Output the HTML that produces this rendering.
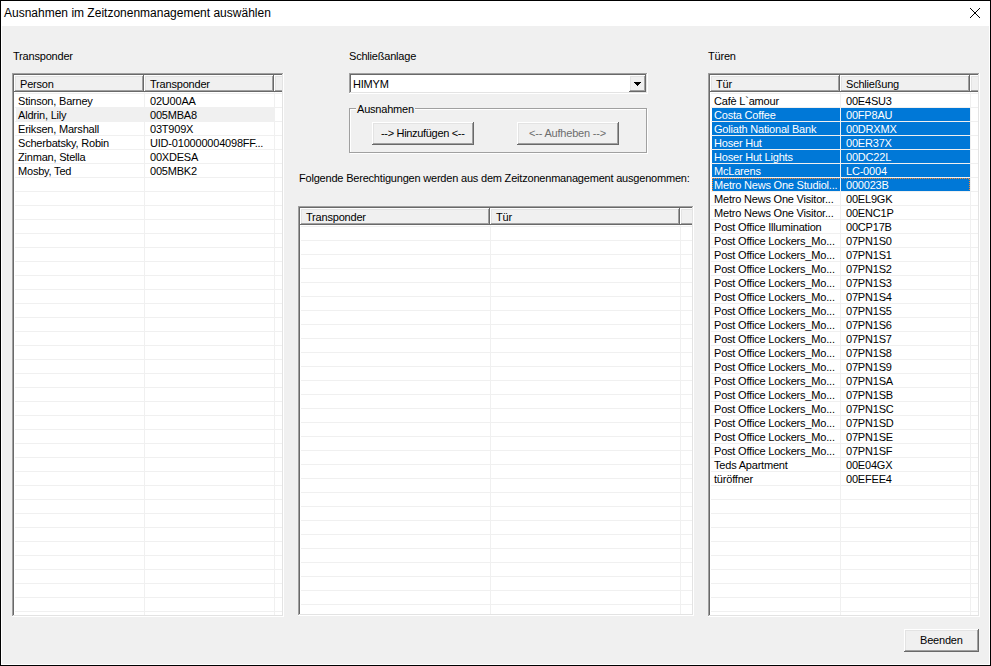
<!DOCTYPE html>
<html><head><meta charset="utf-8"><title>Ausnahmen</title><style>
html,body{margin:0;padding:0;}
body{width:991px;height:666px;overflow:hidden;position:relative;background:#f0f0f0;font-family:"Liberation Sans",sans-serif;font-size:11px;color:#000;}
.r{position:absolute;}
.t{position:absolute;white-space:nowrap;line-height:13px;letter-spacing:-0.2px;}
.tt{position:absolute;white-space:nowrap;line-height:15px;font-size:12px;}
.fh{background:repeating-linear-gradient(90deg,#ff8728 0 1px,transparent 1px 2px);}
.fv{background:repeating-linear-gradient(180deg,#ff8728 0 1px,transparent 1px 2px);}
</style></head><body>

<div class="r" style="left:0px;top:0px;width:991px;height:666px;background:#000;"></div>
<div class="r" style="left:1px;top:1px;width:989px;height:664px;background:#fff;"></div>
<div class="r" style="left:2px;top:26px;width:987px;height:638px;background:#f0f0f0;"></div>
<div class="tt" style="left:4px;top:6px;">Ausnahmen im Zeitzonenmanagement auswählen</div>
<svg class="r" style="left:970px;top:8px" width="10" height="10" shape-rendering="crispEdges" fill="#000"><rect x="0" y="0" width="1" height="1"/><rect x="9" y="0" width="1" height="1"/><rect x="1" y="1" width="1" height="1"/><rect x="8" y="1" width="1" height="1"/><rect x="2" y="2" width="1" height="1"/><rect x="7" y="2" width="1" height="1"/><rect x="3" y="3" width="1" height="1"/><rect x="6" y="3" width="1" height="1"/><rect x="4" y="4" width="1" height="1"/><rect x="5" y="4" width="1" height="1"/><rect x="5" y="5" width="1" height="1"/><rect x="4" y="5" width="1" height="1"/><rect x="6" y="6" width="1" height="1"/><rect x="3" y="6" width="1" height="1"/><rect x="7" y="7" width="1" height="1"/><rect x="2" y="7" width="1" height="1"/><rect x="8" y="8" width="1" height="1"/><rect x="1" y="8" width="1" height="1"/><rect x="9" y="9" width="1" height="1"/><rect x="0" y="9" width="1" height="1"/></svg>
<div class="t" style="left:13px;top:50px;">Transponder</div>
<div class="t" style="left:349px;top:50px;">Schließanlage</div>
<div class="t" style="left:708px;top:50px;">Türen</div>
<div class="t" style="left:299px;top:172px;">Folgende Berechtigungen werden aus dem Zeitzonenmanagement ausgenommen:</div>
<div class="r" style="left:12px;top:73px;width:271px;height:1px;background:#a0a0a0;"></div>
<div class="r" style="left:12px;top:73px;width:1px;height:543px;background:#a0a0a0;"></div>
<div class="r" style="left:12px;top:616px;width:272px;height:1px;background:#ffffff;"></div>
<div class="r" style="left:283px;top:73px;width:1px;height:544px;background:#ffffff;"></div>
<div class="r" style="left:13px;top:74px;width:269px;height:1px;background:#696969;"></div>
<div class="r" style="left:13px;top:74px;width:1px;height:541px;background:#696969;"></div>
<div class="r" style="left:13px;top:615px;width:270px;height:1px;background:#e3e3e3;"></div>
<div class="r" style="left:282px;top:74px;width:1px;height:542px;background:#e3e3e3;"></div>
<div class="r" style="left:14px;top:75px;width:268px;height:540px;background:#ffffff;"></div>
<div class="r" style="left:14px;top:75px;width:130px;height:17px;background:#f0f0f0;"></div>
<div class="r" style="left:14px;top:75px;width:129px;height:1px;background:#ffffff;"></div>
<div class="r" style="left:14px;top:75px;width:1px;height:16px;background:#ffffff;"></div>
<div class="r" style="left:14px;top:91px;width:130px;height:1px;background:#696969;"></div>
<div class="r" style="left:143px;top:75px;width:1px;height:17px;background:#696969;"></div>
<div class="r" style="left:15px;top:76px;width:127px;height:1px;background:#e3e3e3;"></div>
<div class="r" style="left:15px;top:76px;width:1px;height:14px;background:#e3e3e3;"></div>
<div class="r" style="left:15px;top:90px;width:128px;height:1px;background:#a0a0a0;"></div>
<div class="r" style="left:142px;top:76px;width:1px;height:15px;background:#a0a0a0;"></div>
<div class="t" style="left:20px;top:78px;">Person</div>
<div class="r" style="left:144px;top:75px;width:130px;height:17px;background:#f0f0f0;"></div>
<div class="r" style="left:144px;top:75px;width:129px;height:1px;background:#ffffff;"></div>
<div class="r" style="left:144px;top:75px;width:1px;height:16px;background:#ffffff;"></div>
<div class="r" style="left:144px;top:91px;width:130px;height:1px;background:#696969;"></div>
<div class="r" style="left:273px;top:75px;width:1px;height:17px;background:#696969;"></div>
<div class="r" style="left:145px;top:76px;width:127px;height:1px;background:#e3e3e3;"></div>
<div class="r" style="left:145px;top:76px;width:1px;height:14px;background:#e3e3e3;"></div>
<div class="r" style="left:145px;top:90px;width:128px;height:1px;background:#a0a0a0;"></div>
<div class="r" style="left:272px;top:76px;width:1px;height:15px;background:#a0a0a0;"></div>
<div class="t" style="left:150px;top:78px;">Transponder</div>
<div class="r" style="left:274px;top:75px;width:8px;height:17px;background:#f0f0f0;"></div>
<div class="r" style="left:274px;top:75px;width:8px;height:1px;background:#ffffff;"></div>
<div class="r" style="left:274px;top:75px;width:1px;height:16px;background:#ffffff;"></div>
<div class="r" style="left:274px;top:91px;width:8px;height:1px;background:#696969;"></div>
<div class="r" style="left:275px;top:76px;width:7px;height:1px;background:#e3e3e3;"></div>
<div class="r" style="left:275px;top:76px;width:1px;height:14px;background:#e3e3e3;"></div>
<div class="r" style="left:275px;top:90px;width:7px;height:1px;background:#a0a0a0;"></div>
<div class="r" style="left:16px;top:107px;width:258px;height:14px;background:#f0f0f0;"></div>
<div class="r" style="left:15px;top:93px;width:267px;height:1px;background:#f0f0f0;"></div>
<div class="r" style="left:15px;top:107px;width:267px;height:1px;background:#f0f0f0;"></div>
<div class="r" style="left:15px;top:121px;width:267px;height:1px;background:#f0f0f0;"></div>
<div class="r" style="left:15px;top:135px;width:267px;height:1px;background:#f0f0f0;"></div>
<div class="r" style="left:15px;top:149px;width:267px;height:1px;background:#f0f0f0;"></div>
<div class="r" style="left:15px;top:163px;width:267px;height:1px;background:#f0f0f0;"></div>
<div class="r" style="left:15px;top:177px;width:267px;height:1px;background:#f0f0f0;"></div>
<div class="r" style="left:15px;top:191px;width:267px;height:1px;background:#f0f0f0;"></div>
<div class="r" style="left:15px;top:205px;width:267px;height:1px;background:#f0f0f0;"></div>
<div class="r" style="left:15px;top:219px;width:267px;height:1px;background:#f0f0f0;"></div>
<div class="r" style="left:15px;top:233px;width:267px;height:1px;background:#f0f0f0;"></div>
<div class="r" style="left:15px;top:247px;width:267px;height:1px;background:#f0f0f0;"></div>
<div class="r" style="left:15px;top:261px;width:267px;height:1px;background:#f0f0f0;"></div>
<div class="r" style="left:15px;top:275px;width:267px;height:1px;background:#f0f0f0;"></div>
<div class="r" style="left:15px;top:289px;width:267px;height:1px;background:#f0f0f0;"></div>
<div class="r" style="left:15px;top:303px;width:267px;height:1px;background:#f0f0f0;"></div>
<div class="r" style="left:15px;top:317px;width:267px;height:1px;background:#f0f0f0;"></div>
<div class="r" style="left:15px;top:331px;width:267px;height:1px;background:#f0f0f0;"></div>
<div class="r" style="left:15px;top:345px;width:267px;height:1px;background:#f0f0f0;"></div>
<div class="r" style="left:15px;top:359px;width:267px;height:1px;background:#f0f0f0;"></div>
<div class="r" style="left:15px;top:373px;width:267px;height:1px;background:#f0f0f0;"></div>
<div class="r" style="left:15px;top:387px;width:267px;height:1px;background:#f0f0f0;"></div>
<div class="r" style="left:15px;top:401px;width:267px;height:1px;background:#f0f0f0;"></div>
<div class="r" style="left:15px;top:415px;width:267px;height:1px;background:#f0f0f0;"></div>
<div class="r" style="left:15px;top:429px;width:267px;height:1px;background:#f0f0f0;"></div>
<div class="r" style="left:15px;top:443px;width:267px;height:1px;background:#f0f0f0;"></div>
<div class="r" style="left:15px;top:457px;width:267px;height:1px;background:#f0f0f0;"></div>
<div class="r" style="left:15px;top:471px;width:267px;height:1px;background:#f0f0f0;"></div>
<div class="r" style="left:15px;top:485px;width:267px;height:1px;background:#f0f0f0;"></div>
<div class="r" style="left:15px;top:499px;width:267px;height:1px;background:#f0f0f0;"></div>
<div class="r" style="left:15px;top:513px;width:267px;height:1px;background:#f0f0f0;"></div>
<div class="r" style="left:15px;top:527px;width:267px;height:1px;background:#f0f0f0;"></div>
<div class="r" style="left:15px;top:541px;width:267px;height:1px;background:#f0f0f0;"></div>
<div class="r" style="left:15px;top:555px;width:267px;height:1px;background:#f0f0f0;"></div>
<div class="r" style="left:15px;top:569px;width:267px;height:1px;background:#f0f0f0;"></div>
<div class="r" style="left:15px;top:583px;width:267px;height:1px;background:#f0f0f0;"></div>
<div class="r" style="left:15px;top:597px;width:267px;height:1px;background:#f0f0f0;"></div>
<div class="r" style="left:15px;top:611px;width:267px;height:1px;background:#f0f0f0;"></div>
<div class="r" style="left:144px;top:92px;width:1px;height:523px;background:#f0f0f0;"></div>
<div class="r" style="left:274px;top:92px;width:1px;height:523px;background:#f0f0f0;"></div>
<div class="t" style="left:18px;top:95px;">Stinson, Barney</div>
<div class="t" style="left:150px;top:95px;">02U00AA</div>
<div class="t" style="left:18px;top:109px;">Aldrin, Lily</div>
<div class="t" style="left:150px;top:109px;">005MBA8</div>
<div class="t" style="left:18px;top:123px;">Eriksen, Marshall</div>
<div class="t" style="left:150px;top:123px;">03T909X</div>
<div class="t" style="left:18px;top:137px;">Scherbatsky, Robin</div>
<div class="t" style="left:150px;top:137px;">UID-010000004098FF...</div>
<div class="t" style="left:18px;top:151px;">Zinman, Stella</div>
<div class="t" style="left:150px;top:151px;">00XDESA</div>
<div class="t" style="left:18px;top:165px;">Mosby, Ted</div>
<div class="t" style="left:150px;top:165px;">005MBK2</div>
<div class="r" style="left:708px;top:73px;width:271px;height:1px;background:#a0a0a0;"></div>
<div class="r" style="left:708px;top:73px;width:1px;height:543px;background:#a0a0a0;"></div>
<div class="r" style="left:708px;top:616px;width:272px;height:1px;background:#ffffff;"></div>
<div class="r" style="left:979px;top:73px;width:1px;height:544px;background:#ffffff;"></div>
<div class="r" style="left:709px;top:74px;width:269px;height:1px;background:#696969;"></div>
<div class="r" style="left:709px;top:74px;width:1px;height:541px;background:#696969;"></div>
<div class="r" style="left:709px;top:615px;width:270px;height:1px;background:#e3e3e3;"></div>
<div class="r" style="left:978px;top:74px;width:1px;height:542px;background:#e3e3e3;"></div>
<div class="r" style="left:710px;top:75px;width:268px;height:540px;background:#ffffff;"></div>
<div class="r" style="left:710px;top:75px;width:130px;height:17px;background:#f0f0f0;"></div>
<div class="r" style="left:710px;top:75px;width:129px;height:1px;background:#ffffff;"></div>
<div class="r" style="left:710px;top:75px;width:1px;height:16px;background:#ffffff;"></div>
<div class="r" style="left:710px;top:91px;width:130px;height:1px;background:#696969;"></div>
<div class="r" style="left:839px;top:75px;width:1px;height:17px;background:#696969;"></div>
<div class="r" style="left:711px;top:76px;width:127px;height:1px;background:#e3e3e3;"></div>
<div class="r" style="left:711px;top:76px;width:1px;height:14px;background:#e3e3e3;"></div>
<div class="r" style="left:711px;top:90px;width:128px;height:1px;background:#a0a0a0;"></div>
<div class="r" style="left:838px;top:76px;width:1px;height:15px;background:#a0a0a0;"></div>
<div class="t" style="left:716px;top:78px;">Tür</div>
<div class="r" style="left:840px;top:75px;width:130px;height:17px;background:#f0f0f0;"></div>
<div class="r" style="left:840px;top:75px;width:129px;height:1px;background:#ffffff;"></div>
<div class="r" style="left:840px;top:75px;width:1px;height:16px;background:#ffffff;"></div>
<div class="r" style="left:840px;top:91px;width:130px;height:1px;background:#696969;"></div>
<div class="r" style="left:969px;top:75px;width:1px;height:17px;background:#696969;"></div>
<div class="r" style="left:841px;top:76px;width:127px;height:1px;background:#e3e3e3;"></div>
<div class="r" style="left:841px;top:76px;width:1px;height:14px;background:#e3e3e3;"></div>
<div class="r" style="left:841px;top:90px;width:128px;height:1px;background:#a0a0a0;"></div>
<div class="r" style="left:968px;top:76px;width:1px;height:15px;background:#a0a0a0;"></div>
<div class="t" style="left:846px;top:78px;">Schließung</div>
<div class="r" style="left:970px;top:75px;width:8px;height:17px;background:#f0f0f0;"></div>
<div class="r" style="left:970px;top:75px;width:8px;height:1px;background:#ffffff;"></div>
<div class="r" style="left:970px;top:75px;width:1px;height:16px;background:#ffffff;"></div>
<div class="r" style="left:970px;top:91px;width:8px;height:1px;background:#696969;"></div>
<div class="r" style="left:971px;top:76px;width:7px;height:1px;background:#e3e3e3;"></div>
<div class="r" style="left:971px;top:76px;width:1px;height:14px;background:#e3e3e3;"></div>
<div class="r" style="left:971px;top:90px;width:7px;height:1px;background:#a0a0a0;"></div>
<div class="r" style="left:712px;top:108px;width:258px;height:13px;background:#0078d7;"></div>
<div class="r" style="left:712px;top:122px;width:258px;height:13px;background:#0078d7;"></div>
<div class="r" style="left:712px;top:136px;width:258px;height:13px;background:#0078d7;"></div>
<div class="r" style="left:712px;top:150px;width:258px;height:13px;background:#0078d7;"></div>
<div class="r" style="left:712px;top:164px;width:258px;height:13px;background:#0078d7;"></div>
<div class="r" style="left:712px;top:178px;width:258px;height:13px;background:#0078d7;"></div>
<div class="r fh" style="left:712px;top:178px;width:258px;height:1px;"></div>
<div class="r fv" style="left:712px;top:178px;width:1px;height:13px;"></div>
<div class="r fv" style="left:969px;top:179px;width:1px;height:13px;"></div>
<div class="r" style="left:711px;top:93px;width:267px;height:1px;background:#f0f0f0;"></div>
<div class="r" style="left:711px;top:107px;width:267px;height:1px;background:#f0f0f0;"></div>
<div class="r" style="left:711px;top:121px;width:267px;height:1px;background:#f0f0f0;"></div>
<div class="r" style="left:711px;top:135px;width:267px;height:1px;background:#f0f0f0;"></div>
<div class="r" style="left:711px;top:149px;width:267px;height:1px;background:#f0f0f0;"></div>
<div class="r" style="left:711px;top:163px;width:267px;height:1px;background:#f0f0f0;"></div>
<div class="r" style="left:711px;top:177px;width:267px;height:1px;background:#f0f0f0;"></div>
<div class="r" style="left:711px;top:191px;width:267px;height:1px;background:#f0f0f0;"></div>
<div class="r" style="left:711px;top:205px;width:267px;height:1px;background:#f0f0f0;"></div>
<div class="r" style="left:711px;top:219px;width:267px;height:1px;background:#f0f0f0;"></div>
<div class="r" style="left:711px;top:233px;width:267px;height:1px;background:#f0f0f0;"></div>
<div class="r" style="left:711px;top:247px;width:267px;height:1px;background:#f0f0f0;"></div>
<div class="r" style="left:711px;top:261px;width:267px;height:1px;background:#f0f0f0;"></div>
<div class="r" style="left:711px;top:275px;width:267px;height:1px;background:#f0f0f0;"></div>
<div class="r" style="left:711px;top:289px;width:267px;height:1px;background:#f0f0f0;"></div>
<div class="r" style="left:711px;top:303px;width:267px;height:1px;background:#f0f0f0;"></div>
<div class="r" style="left:711px;top:317px;width:267px;height:1px;background:#f0f0f0;"></div>
<div class="r" style="left:711px;top:331px;width:267px;height:1px;background:#f0f0f0;"></div>
<div class="r" style="left:711px;top:345px;width:267px;height:1px;background:#f0f0f0;"></div>
<div class="r" style="left:711px;top:359px;width:267px;height:1px;background:#f0f0f0;"></div>
<div class="r" style="left:711px;top:373px;width:267px;height:1px;background:#f0f0f0;"></div>
<div class="r" style="left:711px;top:387px;width:267px;height:1px;background:#f0f0f0;"></div>
<div class="r" style="left:711px;top:401px;width:267px;height:1px;background:#f0f0f0;"></div>
<div class="r" style="left:711px;top:415px;width:267px;height:1px;background:#f0f0f0;"></div>
<div class="r" style="left:711px;top:429px;width:267px;height:1px;background:#f0f0f0;"></div>
<div class="r" style="left:711px;top:443px;width:267px;height:1px;background:#f0f0f0;"></div>
<div class="r" style="left:711px;top:457px;width:267px;height:1px;background:#f0f0f0;"></div>
<div class="r" style="left:711px;top:471px;width:267px;height:1px;background:#f0f0f0;"></div>
<div class="r" style="left:711px;top:485px;width:267px;height:1px;background:#f0f0f0;"></div>
<div class="r" style="left:711px;top:499px;width:267px;height:1px;background:#f0f0f0;"></div>
<div class="r" style="left:711px;top:513px;width:267px;height:1px;background:#f0f0f0;"></div>
<div class="r" style="left:711px;top:527px;width:267px;height:1px;background:#f0f0f0;"></div>
<div class="r" style="left:711px;top:541px;width:267px;height:1px;background:#f0f0f0;"></div>
<div class="r" style="left:711px;top:555px;width:267px;height:1px;background:#f0f0f0;"></div>
<div class="r" style="left:711px;top:569px;width:267px;height:1px;background:#f0f0f0;"></div>
<div class="r" style="left:711px;top:583px;width:267px;height:1px;background:#f0f0f0;"></div>
<div class="r" style="left:711px;top:597px;width:267px;height:1px;background:#f0f0f0;"></div>
<div class="r" style="left:711px;top:611px;width:267px;height:1px;background:#f0f0f0;"></div>
<div class="r" style="left:840px;top:92px;width:1px;height:523px;background:#f0f0f0;"></div>
<div class="r" style="left:970px;top:92px;width:1px;height:523px;background:#f0f0f0;"></div>
<div class="t" style="left:714px;top:95px;">Cafè L`amour</div>
<div class="t" style="left:846px;top:95px;">00E4SU3</div>
<div class="t" style="left:714px;top:109px;color:#fff;">Costa Coffee</div>
<div class="t" style="left:846px;top:109px;color:#fff;">00FP8AU</div>
<div class="t" style="left:714px;top:123px;color:#fff;">Goliath National Bank</div>
<div class="t" style="left:846px;top:123px;color:#fff;">00DRXMX</div>
<div class="t" style="left:714px;top:137px;color:#fff;">Hoser Hut</div>
<div class="t" style="left:846px;top:137px;color:#fff;">00ER37X</div>
<div class="t" style="left:714px;top:151px;color:#fff;">Hoser Hut Lights</div>
<div class="t" style="left:846px;top:151px;color:#fff;">00DC22L</div>
<div class="t" style="left:714px;top:165px;color:#fff;">McLarens</div>
<div class="t" style="left:846px;top:165px;color:#fff;">LC-0004</div>
<div class="t" style="left:714px;top:179px;color:#fff;">Metro News One Studiol...</div>
<div class="t" style="left:846px;top:179px;color:#fff;">000023B</div>
<div class="t" style="left:714px;top:193px;">Metro News One Visitor...</div>
<div class="t" style="left:846px;top:193px;">00EL9GK</div>
<div class="t" style="left:714px;top:207px;">Metro News One Visitor...</div>
<div class="t" style="left:846px;top:207px;">00ENC1P</div>
<div class="t" style="left:714px;top:221px;">Post Office Illumination</div>
<div class="t" style="left:846px;top:221px;">00CP17B</div>
<div class="t" style="left:714px;top:235px;">Post Office Lockers_Mo...</div>
<div class="t" style="left:846px;top:235px;">07PN1S0</div>
<div class="t" style="left:714px;top:249px;">Post Office Lockers_Mo...</div>
<div class="t" style="left:846px;top:249px;">07PN1S1</div>
<div class="t" style="left:714px;top:263px;">Post Office Lockers_Mo...</div>
<div class="t" style="left:846px;top:263px;">07PN1S2</div>
<div class="t" style="left:714px;top:277px;">Post Office Lockers_Mo...</div>
<div class="t" style="left:846px;top:277px;">07PN1S3</div>
<div class="t" style="left:714px;top:291px;">Post Office Lockers_Mo...</div>
<div class="t" style="left:846px;top:291px;">07PN1S4</div>
<div class="t" style="left:714px;top:305px;">Post Office Lockers_Mo...</div>
<div class="t" style="left:846px;top:305px;">07PN1S5</div>
<div class="t" style="left:714px;top:319px;">Post Office Lockers_Mo...</div>
<div class="t" style="left:846px;top:319px;">07PN1S6</div>
<div class="t" style="left:714px;top:333px;">Post Office Lockers_Mo...</div>
<div class="t" style="left:846px;top:333px;">07PN1S7</div>
<div class="t" style="left:714px;top:347px;">Post Office Lockers_Mo...</div>
<div class="t" style="left:846px;top:347px;">07PN1S8</div>
<div class="t" style="left:714px;top:361px;">Post Office Lockers_Mo...</div>
<div class="t" style="left:846px;top:361px;">07PN1S9</div>
<div class="t" style="left:714px;top:375px;">Post Office Lockers_Mo...</div>
<div class="t" style="left:846px;top:375px;">07PN1SA</div>
<div class="t" style="left:714px;top:389px;">Post Office Lockers_Mo...</div>
<div class="t" style="left:846px;top:389px;">07PN1SB</div>
<div class="t" style="left:714px;top:403px;">Post Office Lockers_Mo...</div>
<div class="t" style="left:846px;top:403px;">07PN1SC</div>
<div class="t" style="left:714px;top:417px;">Post Office Lockers_Mo...</div>
<div class="t" style="left:846px;top:417px;">07PN1SD</div>
<div class="t" style="left:714px;top:431px;">Post Office Lockers_Mo...</div>
<div class="t" style="left:846px;top:431px;">07PN1SE</div>
<div class="t" style="left:714px;top:445px;">Post Office Lockers_Mo...</div>
<div class="t" style="left:846px;top:445px;">07PN1SF</div>
<div class="t" style="left:714px;top:459px;">Teds Apartment</div>
<div class="t" style="left:846px;top:459px;">00E04GX</div>
<div class="t" style="left:714px;top:473px;">türöffner</div>
<div class="t" style="left:846px;top:473px;">00EFEE4</div>
<div class="r" style="left:298px;top:206px;width:395px;height:1px;background:#a0a0a0;"></div>
<div class="r" style="left:298px;top:206px;width:1px;height:409px;background:#a0a0a0;"></div>
<div class="r" style="left:298px;top:615px;width:396px;height:1px;background:#ffffff;"></div>
<div class="r" style="left:693px;top:206px;width:1px;height:410px;background:#ffffff;"></div>
<div class="r" style="left:299px;top:207px;width:393px;height:1px;background:#696969;"></div>
<div class="r" style="left:299px;top:207px;width:1px;height:407px;background:#696969;"></div>
<div class="r" style="left:299px;top:614px;width:394px;height:1px;background:#e3e3e3;"></div>
<div class="r" style="left:692px;top:207px;width:1px;height:408px;background:#e3e3e3;"></div>
<div class="r" style="left:300px;top:208px;width:392px;height:406px;background:#ffffff;"></div>
<div class="r" style="left:300px;top:208px;width:190px;height:17px;background:#f0f0f0;"></div>
<div class="r" style="left:300px;top:208px;width:189px;height:1px;background:#ffffff;"></div>
<div class="r" style="left:300px;top:208px;width:1px;height:16px;background:#ffffff;"></div>
<div class="r" style="left:300px;top:224px;width:190px;height:1px;background:#696969;"></div>
<div class="r" style="left:489px;top:208px;width:1px;height:17px;background:#696969;"></div>
<div class="r" style="left:301px;top:209px;width:187px;height:1px;background:#e3e3e3;"></div>
<div class="r" style="left:301px;top:209px;width:1px;height:14px;background:#e3e3e3;"></div>
<div class="r" style="left:301px;top:223px;width:188px;height:1px;background:#a0a0a0;"></div>
<div class="r" style="left:488px;top:209px;width:1px;height:15px;background:#a0a0a0;"></div>
<div class="t" style="left:306px;top:211px;">Transponder</div>
<div class="r" style="left:490px;top:208px;width:190px;height:17px;background:#f0f0f0;"></div>
<div class="r" style="left:490px;top:208px;width:189px;height:1px;background:#ffffff;"></div>
<div class="r" style="left:490px;top:208px;width:1px;height:16px;background:#ffffff;"></div>
<div class="r" style="left:490px;top:224px;width:190px;height:1px;background:#696969;"></div>
<div class="r" style="left:679px;top:208px;width:1px;height:17px;background:#696969;"></div>
<div class="r" style="left:491px;top:209px;width:187px;height:1px;background:#e3e3e3;"></div>
<div class="r" style="left:491px;top:209px;width:1px;height:14px;background:#e3e3e3;"></div>
<div class="r" style="left:491px;top:223px;width:188px;height:1px;background:#a0a0a0;"></div>
<div class="r" style="left:678px;top:209px;width:1px;height:15px;background:#a0a0a0;"></div>
<div class="t" style="left:496px;top:211px;">Tür</div>
<div class="r" style="left:680px;top:208px;width:12px;height:17px;background:#f0f0f0;"></div>
<div class="r" style="left:680px;top:208px;width:12px;height:1px;background:#ffffff;"></div>
<div class="r" style="left:680px;top:208px;width:1px;height:16px;background:#ffffff;"></div>
<div class="r" style="left:680px;top:224px;width:12px;height:1px;background:#696969;"></div>
<div class="r" style="left:681px;top:209px;width:11px;height:1px;background:#e3e3e3;"></div>
<div class="r" style="left:681px;top:209px;width:1px;height:14px;background:#e3e3e3;"></div>
<div class="r" style="left:681px;top:223px;width:11px;height:1px;background:#a0a0a0;"></div>
<div class="r" style="left:301px;top:226px;width:391px;height:1px;background:#f0f0f0;"></div>
<div class="r" style="left:301px;top:240px;width:391px;height:1px;background:#f0f0f0;"></div>
<div class="r" style="left:301px;top:254px;width:391px;height:1px;background:#f0f0f0;"></div>
<div class="r" style="left:301px;top:268px;width:391px;height:1px;background:#f0f0f0;"></div>
<div class="r" style="left:301px;top:282px;width:391px;height:1px;background:#f0f0f0;"></div>
<div class="r" style="left:301px;top:296px;width:391px;height:1px;background:#f0f0f0;"></div>
<div class="r" style="left:301px;top:310px;width:391px;height:1px;background:#f0f0f0;"></div>
<div class="r" style="left:301px;top:324px;width:391px;height:1px;background:#f0f0f0;"></div>
<div class="r" style="left:301px;top:338px;width:391px;height:1px;background:#f0f0f0;"></div>
<div class="r" style="left:301px;top:352px;width:391px;height:1px;background:#f0f0f0;"></div>
<div class="r" style="left:301px;top:366px;width:391px;height:1px;background:#f0f0f0;"></div>
<div class="r" style="left:301px;top:380px;width:391px;height:1px;background:#f0f0f0;"></div>
<div class="r" style="left:301px;top:394px;width:391px;height:1px;background:#f0f0f0;"></div>
<div class="r" style="left:301px;top:408px;width:391px;height:1px;background:#f0f0f0;"></div>
<div class="r" style="left:301px;top:422px;width:391px;height:1px;background:#f0f0f0;"></div>
<div class="r" style="left:301px;top:436px;width:391px;height:1px;background:#f0f0f0;"></div>
<div class="r" style="left:301px;top:450px;width:391px;height:1px;background:#f0f0f0;"></div>
<div class="r" style="left:301px;top:464px;width:391px;height:1px;background:#f0f0f0;"></div>
<div class="r" style="left:301px;top:478px;width:391px;height:1px;background:#f0f0f0;"></div>
<div class="r" style="left:301px;top:492px;width:391px;height:1px;background:#f0f0f0;"></div>
<div class="r" style="left:301px;top:506px;width:391px;height:1px;background:#f0f0f0;"></div>
<div class="r" style="left:301px;top:520px;width:391px;height:1px;background:#f0f0f0;"></div>
<div class="r" style="left:301px;top:534px;width:391px;height:1px;background:#f0f0f0;"></div>
<div class="r" style="left:301px;top:548px;width:391px;height:1px;background:#f0f0f0;"></div>
<div class="r" style="left:301px;top:562px;width:391px;height:1px;background:#f0f0f0;"></div>
<div class="r" style="left:301px;top:576px;width:391px;height:1px;background:#f0f0f0;"></div>
<div class="r" style="left:301px;top:590px;width:391px;height:1px;background:#f0f0f0;"></div>
<div class="r" style="left:301px;top:604px;width:391px;height:1px;background:#f0f0f0;"></div>
<div class="r" style="left:490px;top:225px;width:1px;height:389px;background:#f0f0f0;"></div>
<div class="r" style="left:680px;top:225px;width:1px;height:389px;background:#f0f0f0;"></div>
<div class="r" style="left:349px;top:73px;width:298px;height:1px;background:#a0a0a0;"></div>
<div class="r" style="left:349px;top:73px;width:1px;height:20px;background:#a0a0a0;"></div>
<div class="r" style="left:349px;top:93px;width:299px;height:1px;background:#ffffff;"></div>
<div class="r" style="left:647px;top:73px;width:1px;height:21px;background:#ffffff;"></div>
<div class="r" style="left:350px;top:74px;width:296px;height:1px;background:#696969;"></div>
<div class="r" style="left:350px;top:74px;width:1px;height:18px;background:#696969;"></div>
<div class="r" style="left:350px;top:92px;width:297px;height:1px;background:#e3e3e3;"></div>
<div class="r" style="left:646px;top:74px;width:1px;height:19px;background:#e3e3e3;"></div>
<div class="r" style="left:351px;top:75px;width:295px;height:17px;background:#ffffff;"></div>
<div class="t" style="left:353px;top:78px;">HIMYM</div>
<div class="r" style="left:629px;top:75px;width:17px;height:17px;background:#f0f0f0;"></div>
<div class="r" style="left:629px;top:75px;width:16px;height:1px;background:#ffffff;"></div>
<div class="r" style="left:629px;top:75px;width:1px;height:16px;background:#ffffff;"></div>
<div class="r" style="left:629px;top:91px;width:17px;height:1px;background:#696969;"></div>
<div class="r" style="left:645px;top:75px;width:1px;height:17px;background:#696969;"></div>
<div class="r" style="left:630px;top:76px;width:14px;height:1px;background:#e3e3e3;"></div>
<div class="r" style="left:630px;top:76px;width:1px;height:14px;background:#e3e3e3;"></div>
<div class="r" style="left:630px;top:90px;width:15px;height:1px;background:#a0a0a0;"></div>
<div class="r" style="left:644px;top:76px;width:1px;height:15px;background:#a0a0a0;"></div>
<svg class="r" style="left:634px;top:82px" width="7" height="4" shape-rendering="crispEdges" fill="#000"><rect x="0" y="0" width="7" height="1"/><rect x="1" y="1" width="5" height="1"/><rect x="2" y="2" width="3" height="1"/><rect x="3" y="3" width="1" height="1"/></svg>
<div class="r" style="left:349px;top:108px;width:296px;height:43px;border:1px solid #a0a0a0;"></div>
<div class="r" style="left:350px;top:109px;width:296px;height:43px;border:1px solid #fff;"></div>
<div class="r" style="left:349px;top:108px;width:298px;height:1px;background:#a0a0a0;"></div>
<div class="r" style="left:349px;top:108px;width:1px;height:45px;background:#a0a0a0;"></div>
<div class="r" style="left:349px;top:152px;width:298px;height:1px;background:#a0a0a0;"></div>
<div class="r" style="left:646px;top:108px;width:1px;height:45px;background:#a0a0a0;"></div>
<div class="r" style="left:356px;top:104px;width:59px;height:8px;background:#f0f0f0;"></div>
<div class="t" style="left:357px;top:103px;">Ausnahmen</div>
<div class="r" style="left:372px;top:122px;width:102px;height:23px;background:#f0f0f0;"></div>
<div class="r" style="left:372px;top:122px;width:101px;height:1px;background:#ffffff;"></div>
<div class="r" style="left:372px;top:122px;width:1px;height:22px;background:#ffffff;"></div>
<div class="r" style="left:372px;top:144px;width:102px;height:1px;background:#696969;"></div>
<div class="r" style="left:473px;top:122px;width:1px;height:23px;background:#696969;"></div>
<div class="r" style="left:373px;top:123px;width:99px;height:1px;background:#e3e3e3;"></div>
<div class="r" style="left:373px;top:123px;width:1px;height:20px;background:#e3e3e3;"></div>
<div class="r" style="left:373px;top:143px;width:100px;height:1px;background:#a0a0a0;"></div>
<div class="r" style="left:472px;top:123px;width:1px;height:21px;background:#a0a0a0;"></div>
<div class="t" style="left:381px;top:127px;letter-spacing:-0.32px;">--&gt; Hinzufügen &lt;--</div>
<div class="r" style="left:517px;top:122px;width:102px;height:23px;background:#f0f0f0;"></div>
<div class="r" style="left:517px;top:122px;width:101px;height:1px;background:#ffffff;"></div>
<div class="r" style="left:517px;top:122px;width:1px;height:22px;background:#ffffff;"></div>
<div class="r" style="left:517px;top:144px;width:102px;height:1px;background:#696969;"></div>
<div class="r" style="left:618px;top:122px;width:1px;height:23px;background:#696969;"></div>
<div class="r" style="left:518px;top:123px;width:99px;height:1px;background:#e3e3e3;"></div>
<div class="r" style="left:518px;top:123px;width:1px;height:20px;background:#e3e3e3;"></div>
<div class="r" style="left:518px;top:143px;width:100px;height:1px;background:#a0a0a0;"></div>
<div class="r" style="left:617px;top:123px;width:1px;height:21px;background:#a0a0a0;"></div>
<div class="t" style="left:529px;top:127px;color:#6d6d6d;">&lt;-- Aufheben --&gt;</div>
<div class="r" style="left:904px;top:629px;width:75px;height:23px;background:#f0f0f0;"></div>
<div class="r" style="left:904px;top:629px;width:74px;height:1px;background:#ffffff;"></div>
<div class="r" style="left:904px;top:629px;width:1px;height:22px;background:#ffffff;"></div>
<div class="r" style="left:904px;top:651px;width:75px;height:1px;background:#696969;"></div>
<div class="r" style="left:978px;top:629px;width:1px;height:23px;background:#696969;"></div>
<div class="r" style="left:905px;top:630px;width:72px;height:1px;background:#e3e3e3;"></div>
<div class="r" style="left:905px;top:630px;width:1px;height:20px;background:#e3e3e3;"></div>
<div class="r" style="left:905px;top:650px;width:73px;height:1px;background:#a0a0a0;"></div>
<div class="r" style="left:977px;top:630px;width:1px;height:21px;background:#a0a0a0;"></div>
<div class="t" style="left:920px;top:634px;">Beenden</div>
</body></html>
